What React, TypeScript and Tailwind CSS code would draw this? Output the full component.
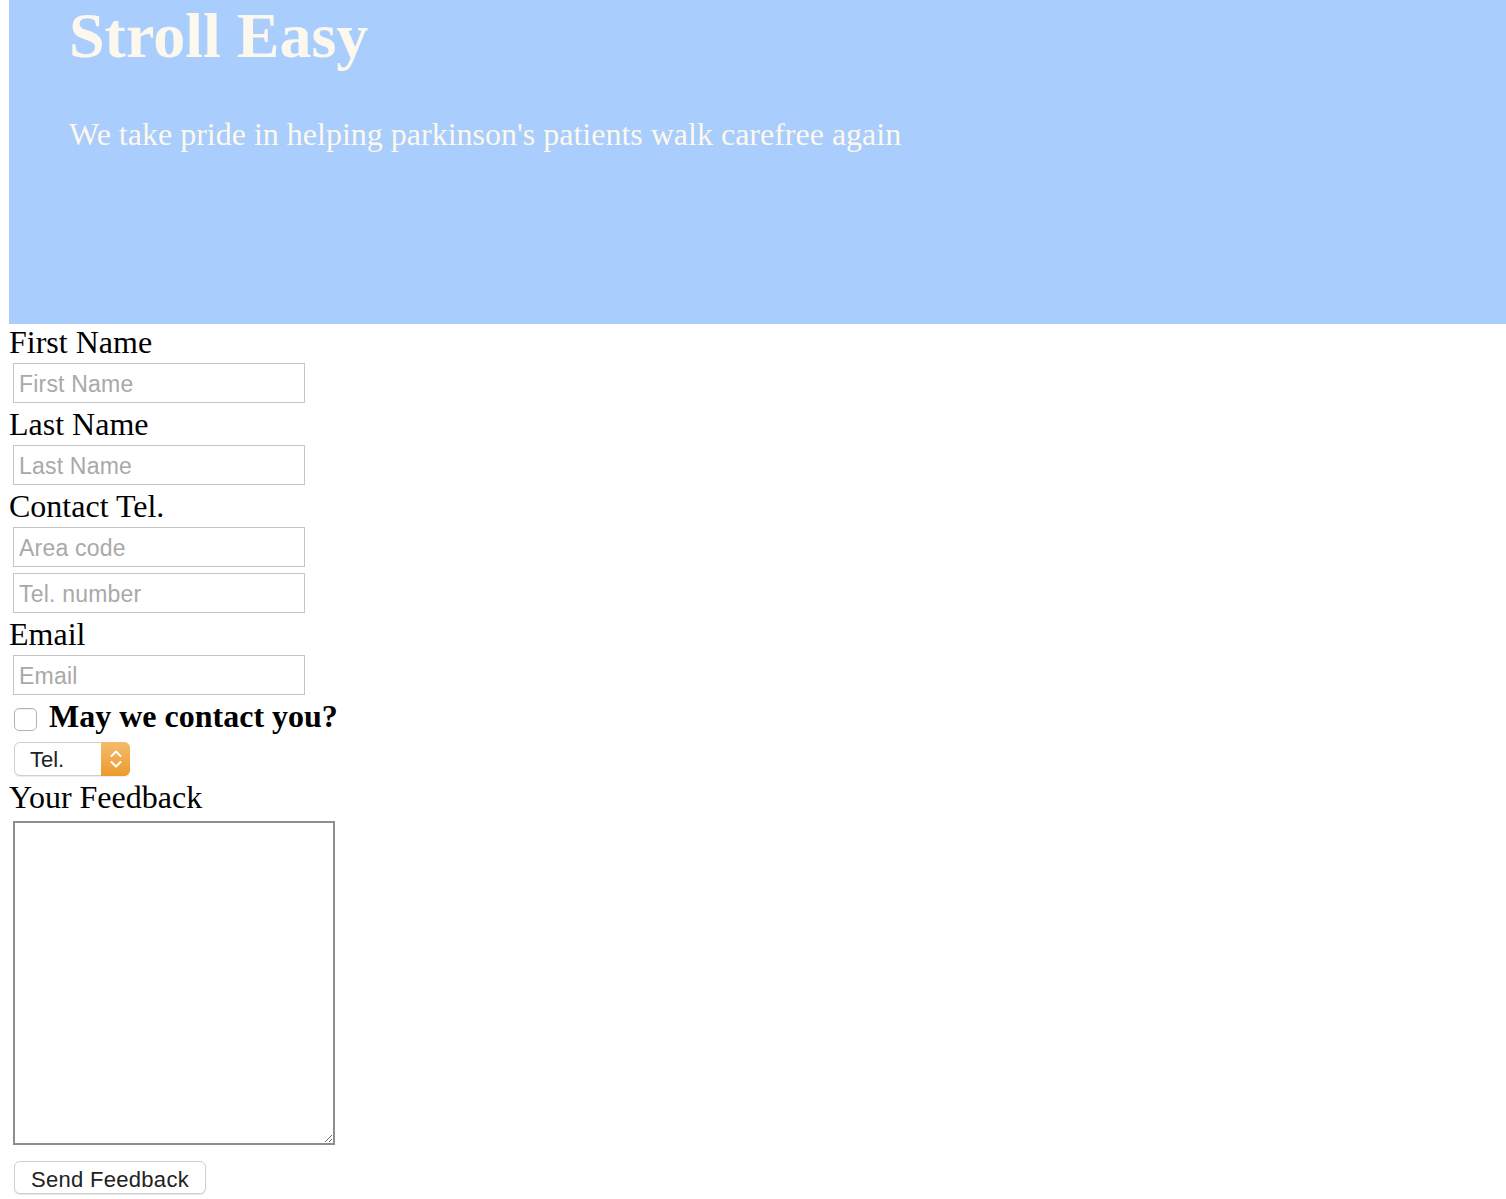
import { useState } from "react";

const serif = "font-['Liberation_Serif','Times_New_Roman',serif]";
const sans = "font-['Liberation_Sans',Arial,sans-serif]";

const inputClass = `block ml-[4px] my-[3px] h-[40px] w-[292px] border border-[#c4c4c4] bg-white px-[5px] pt-[2px] text-[23px] tracking-[0.2px] text-black outline-none placeholder:text-[#a9a9a9] ${sans}`;

function Label({ children }: { children: React.ReactNode }) {
  return <label className="block h-[36px] text-[32px] leading-[36px] text-black">{children}</label>;
}

const Chevrons: React.FC = () => (
  <svg width="14" height="22" viewBox="0 0 14 22" fill="none" stroke="white" strokeWidth="2" strokeLinecap="round" strokeLinejoin="round">
    <path d="M2.5 8 L7 3.5 L11.5 8" />
    <path d="M2.5 14 L7 18.5 L11.5 14" />
  </svg>
);

export default function App() {
  const [contact, setContact] = useState(false);
  const [method, setMethod] = useState("tel");

  return (
    <div className={`min-h-[1199px] bg-white ${serif}`}>
      <header className="ml-[9px] h-[324px] bg-[#a9cdfc] pl-[60px] text-[#fdf8ee]">
        <h1 className="text-[64px] font-bold leading-[71px]">Stroll Easy</h1>
        <p className="mt-[45px] text-[32px] leading-[36px]">
          We take pride in helping parkinson's patients walk carefree again
        </p>
      </header>

      <form className="flex flex-col items-start pl-[9px]" onSubmit={(e) => e.preventDefault()}>
        <Label>First Name</Label>
        <input className={inputClass} placeholder="First Name" />
        <Label>Last Name</Label>
        <input className={inputClass} placeholder="Last Name" />
        <Label>Contact Tel.</Label>
        <input className={inputClass} placeholder="Area code" />
        <input className={inputClass} placeholder="Tel. number" />
        <Label>Email</Label>
        <input className={inputClass} placeholder="Email" type="email" />

        <div className="flex h-[36px] items-center">
          <input
            type="checkbox"
            checked={contact}
            onChange={(e) => setContact(e.target.checked)}
            className="ml-[5px] mt-[6px] h-[23px] w-[23px] appearance-none rounded-[5px] border border-[#b3b3b3] bg-white shadow-[inset_0_1px_1px_rgba(0,0,0,0.06)] checked:bg-[#3b82f6]"
          />
          <span className="ml-[12px] text-[32px] font-bold leading-[36px]">May we contact you?</span>
        </div>

        <div className="relative ml-[5px] mt-[8px] h-[34px] w-[116px]">
          <select
            value={method}
            onChange={(e) => setMethod(e.target.value)}
            className={`h-[34px] w-[116px] appearance-none rounded-[6px] border border-[#cfcfcf] bg-white pl-[15px] text-[22px] text-[#222] shadow-[0_1px_1px_rgba(0,0,0,0.08)] outline-none ${sans}`}
          >
            <option value="tel">Tel.</option>
            <option value="email">Email</option>
          </select>
          <div className="pointer-events-none absolute right-0 top-0 flex h-[34px] w-[29px] items-center justify-center rounded-r-[6px] bg-gradient-to-b from-[#f4bb6a] to-[#ec9a28]">
            <Chevrons />
          </div>
        </div>

        <div className="mt-[3px]">
          <Label>Your Feedback</Label>
        </div>
        <textarea className="ml-[4px] mt-[6px] block h-[324px] w-[322px] border-2 border-[#8e8e8e] bg-white outline-none" />

        <button
          type="submit"
          className={`ml-[5px] mt-[16px] h-[33px] w-[192px] rounded-[6px] border border-[#d0d0d0] bg-white pt-[1px] text-[22px] tracking-[0.3px] text-[#222] shadow-[0_1px_1px_rgba(0,0,0,0.1)] ${sans}`}
        >
          Send Feedback
        </button>
      </form>
    </div>
  );
}
